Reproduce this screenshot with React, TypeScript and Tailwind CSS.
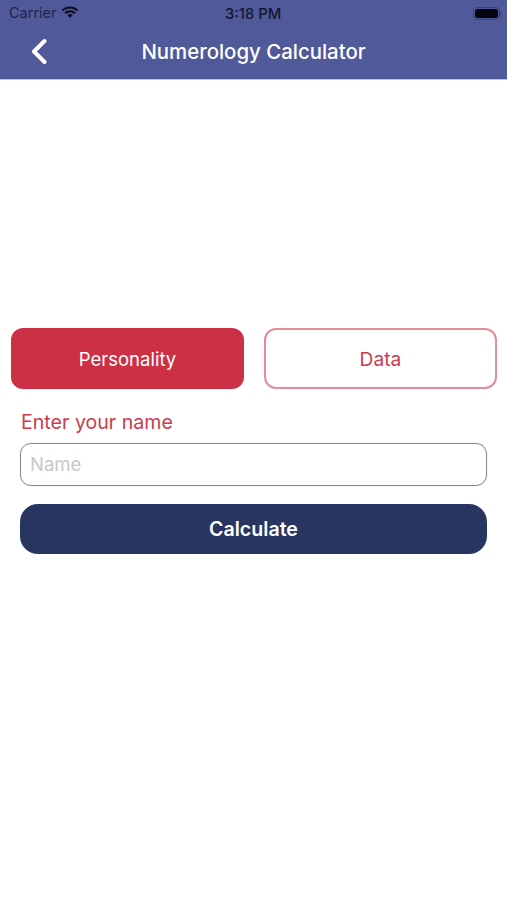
import React from "react";

const font = "font-['Inter','Liberation_Sans',sans-serif]";

export default function App() {
  return (
    <div className={`w-[507px] h-[900px] bg-white flex flex-col ${font}`}>
      <header className="h-[80px] bg-[#50599a] border-b border-[#b9c0e4] flex flex-col shrink-0">
        <div className="relative h-[27px] flex items-center justify-between pl-[9px] pr-[6px] text-[#14162e]">
          <div className="flex items-center gap-[4px]">
            <span className="text-[14.500px] leading-none text-[#20244a]">Carrier</span>
            <svg className="mb-[2px]" width="18" height="13" viewBox="0 0 18 13" fill="#0c0d20">
              <path d="M9 2.600c2.600 0 5 1 6.800 2.700l1.500-1.600C15.100 1.600 12.200.4 9 .4S2.900 1.600.7 3.700l1.500 1.600C4 3.600 6.400 2.600 9 2.600z" />
              <path d="M9 6.400c1.600 0 3 .6 4.100 1.600l1.500-1.600C13.100 5 11.200 4.200 9 4.200S4.900 5 3.400 6.400L4.900 8c1.100-1 2.500-1.600 4.100-1.600z" />
              <path d="M9 8.100c-1 0-1.900.4-2.600 1L9 12l2.600-2.900c-.7-.6-1.600-1-2.600-1z" />
            </svg>
          </div>
          <span className="absolute left-[225px] top-[6px] text-[14.800px] leading-[16px] font-medium text-[#14162e]">3:18 PM</span>
          <div className="flex items-center">
            <div className="w-[27px] h-[13px] rounded-[4px] border border-[#3a4170] p-[1px] flex">
              <div className="flex-1 rounded-[2.500px] bg-[#050510]" />
            </div>
            <div className="w-[1.500px] h-[4px] bg-[#3a4170] rounded-r-sm" />
          </div>
        </div>
        <div className="relative flex-1 flex items-center justify-center pb-[3px]">
          <svg className="absolute left-[30px] top-[11px]" width="17" height="27" viewBox="0 0 17 27" fill="none" stroke="white" strokeWidth="4" strokeLinecap="round" strokeLinejoin="round">
            <path d="M14.500 3 L4 13.500 L14.500 24" />
          </svg>
          <h1 className="text-[20.400px] leading-[24px] font-medium text-white">Numerology Calculator</h1>
        </div>
      </header>

      <main className="pt-[248px] flex flex-col">
        <div className="flex gap-[20px] pl-[11px] pr-[10px]">
          <button className="w-[233px] h-[61px] pt-[2px] rounded-[12px] bg-[#cc3045] text-white text-[18.500px]">Personality</button>
          <button className="w-[233px] h-[61px] pt-[1px] rounded-[12px] bg-white border-2 border-[#e58c98] text-[#cc3a50] text-[19.200px]">Data</button>
        </div>
        <div className="pl-[20px] pr-[20px] pt-[21px] flex flex-col">
          <label className="pl-[1px] text-[19.600px] leading-[24px] text-[#cc3a50]">Enter your name</label>
          <div className="mt-[9px] h-[43px] rounded-[11px] border border-[#8a8a8a] shadow-[0_0_1px_#aaa] flex items-center pl-[9px] text-[18.500px] text-[#c8c8c8]">Name</div>
          <button className="mt-[18px] h-[50px] pt-[2px] rounded-[18px] bg-[#283560] text-white text-[19.600px] font-semibold">Calculate</button>
        </div>
      </main>
    </div>
  );
}
